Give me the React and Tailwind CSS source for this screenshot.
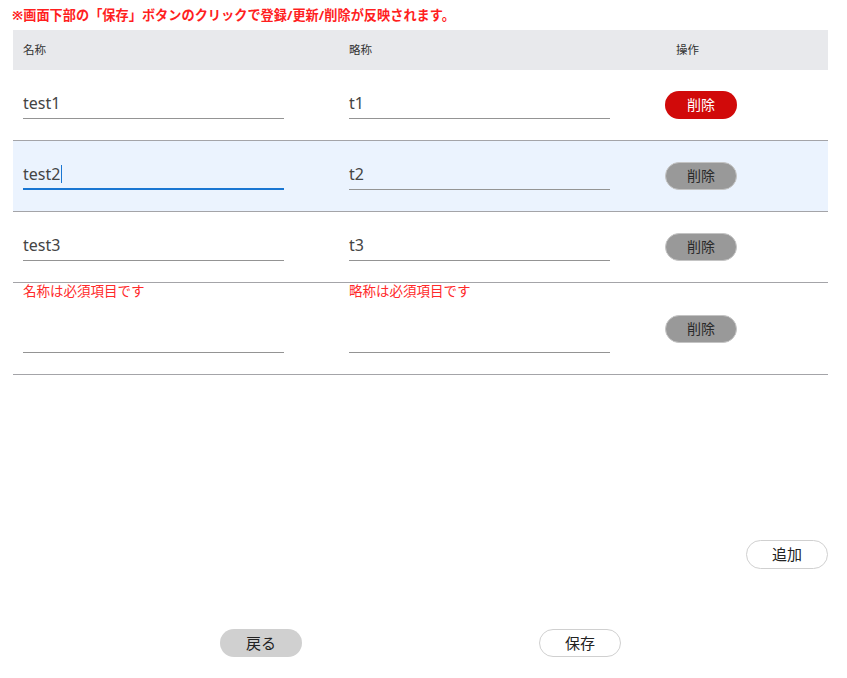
import React from "react";

const FONT = { fontFamily: '"Noto Sans", "Noto Sans CJK JP", sans-serif' };

function Field({ value, focused, error }) {
  return (
    <div className="flex flex-col pb-[21px]">
      {error ? (
        <div className="h-[21px] text-[13.5px] leading-[17px] text-[#ff2a2a]">{error}</div>
      ) : null}
      <div className="pt-[18px]">
        <div
          className={
            "h-[31px] w-[261px] flex items-center text-[16px] text-[#444]" +
            (focused ? " border-b-2 border-[#1976d2]" : " border-b border-[#949494]")
          }
        >
          <span>{value}</span>
          {focused ? <span className="ml-[1px] inline-block h-[18px] w-px bg-[#1976d2]" /> : null}
        </div>
      </div>
    </div>
  );
}

function DelButton({ active }) {
  return (
    <button
      className={
        "h-[28px] w-[72px] rounded-full text-[14px] leading-none " +
        (active
          ? "bg-[#d10a0a] text-white"
          : "bg-[#999999] border border-[#c4c4c4] text-[#2a2a2a]")
      }
    >
      削除
    </button>
  );
}

function Row({ name, abbr, active, focused, bg, nameErr, abbrErr }) {
  return (
    <div className={"flex border-b border-[#a4a4a8] " + (bg ? "bg-[#ebf3fe]" : "")}>
      <div className="w-[326px] pl-[10px]">
        <Field value={name} focused={focused} error={nameErr} />
      </div>
      <div className="w-[326px] pl-[10px]">
        <Field value={abbr} error={abbrErr} />
      </div>
      <div className="flex flex-1 items-center">
        <DelButton active={active} />
      </div>
    </div>
  );
}

export default function App() {
  return (
    <div className="w-[847px] h-[678px] bg-white pl-[13px] pr-[19px]" style={FONT}>
      <div className="h-[30px] pt-[5px] text-[13.2px] leading-[20px] font-bold text-[#ff1f1f] -ml-px whitespace-nowrap">
        ※画面下部の「保存」ボタンのクリックで登録/更新/削除が反映されます。
      </div>
      <div className="flex h-[40px] items-center bg-[#e8e9ec] text-[11.5px] text-[#333]">
        <div className="w-[326px] pl-[10px]">名称</div>
        <div className="w-[326px] pl-[10px]">略称</div>
        <div className="flex-1 pl-[11px]">操作</div>
      </div>
      <Row name="test1" abbr="t1" active />
      <Row name="test2" abbr="t2" focused bg />
      <Row name="test3" abbr="t3" />
      <Row name="" abbr="" nameErr="名称は必須項目です" abbrErr="略称は必須項目です" />
      <div className="mt-[165px] flex justify-end">
        <button className="h-[29px] w-[82px] rounded-full border border-[#d0d0d0] bg-white text-[15px] text-[#222]">
          追加
        </button>
      </div>
      <div className="mt-[60px] flex pl-[207px] gap-[237px]">
        <button className="h-[28px] w-[82px] rounded-full bg-[#d0d0d0] text-[15px] text-[#222]">
          戻る
        </button>
        <button className="h-[28px] w-[82px] rounded-full border border-[#d0d0d0] bg-white text-[15px] text-[#222]">
          保存
        </button>
      </div>
    </div>
  );
}
